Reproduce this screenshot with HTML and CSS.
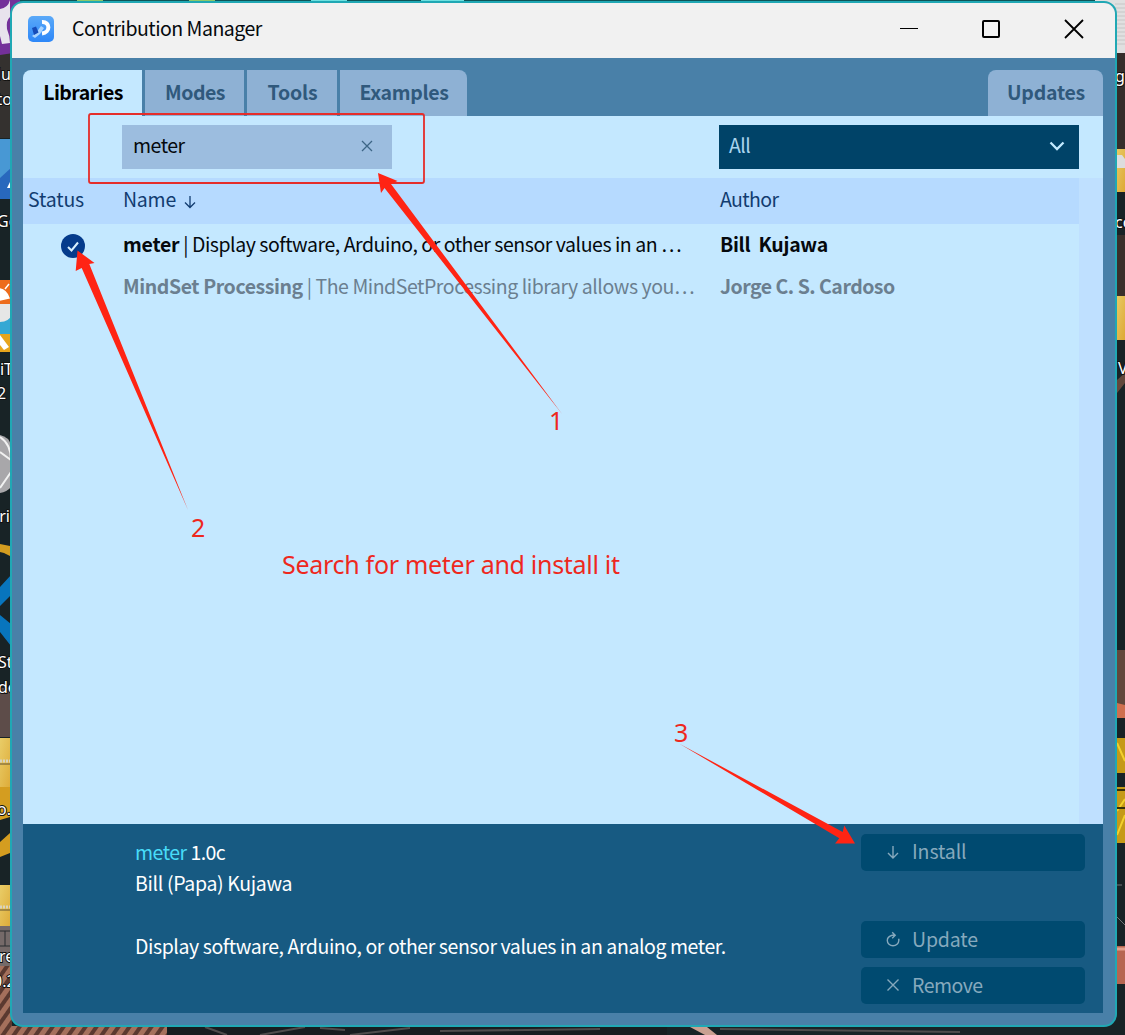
FILE: index.html
```html
<!DOCTYPE html>
<html lang="en">
<head>
<meta charset="utf-8">
<title>Contribution Manager</title>
<link rel="stylesheet" href="styles.css">
</head>
<body>
<div class="desktop">
  <svg class="wallpaper" width="1125" height="1035" viewBox="0 0 1125 1035" aria-hidden="true">
    <defs>
      <linearGradient id="folder" x1="0" y1="0" x2="1" y2="1"><stop offset="0" stop-color="#e9cd68"/><stop offset="1" stop-color="#dda936"/></linearGradient>
      <pattern id="roof" width="9" height="9" patternUnits="userSpaceOnUse" patternTransform="rotate(35)"><rect width="9" height="9" fill="#a5705c"/><rect width="4" height="9" fill="#5b3930"/></pattern>
    </defs>
    <rect width="1125" height="1035" fill="#182326"/>
    <rect width="1125" height="3" fill="#0d5457"/>
    <path d="M77 0h26v1H77zM189 0h26v1h-26z" fill="#8cc86a"/>
    <path d="M311 0h36v2h-36zM421 0h43v2h-43z" fill="#6ee0e0"/>
    <rect y="50" width="12" height="88" fill="#34312f"/>
    <path d="M0 0h20v52L0 55z" fill="#74309a"/>
    <path d="M0 9q8-1 10-9v17q-4 3-3 12 3 7 3 14l-8 1-2-8z" fill="#e8e3ed"/>
    <rect y="139" width="12" height="60" fill="#4898d4"/><path d="M12 167L0 178v21h12z" fill="#2868bd"/><path d="M7 188l3-6v6z" fill="#fff"/>
    <rect y="280" width="12" height="24" fill="#ed6c1c"/><path d="M0 289q6 1 9 9l-9 2zM5 289l4-5" stroke="#fff" stroke-width="1.500" fill="#fff"/><rect y="304" width="12" height="48" fill="#e6e6e6"/><path d="M0 322q9 0 12-8v22H0z" fill="#35a8d4"/><rect y="334" width="12" height="18" fill="#e7a51c"/><path d="M0 335l9 12-5 3-4-5z" fill="#fff"/>
    <path d="M0 435q9 2 11 10v42q-4 5-11 6z" fill="#a8a7aa"/><path d="M0 437q11 7 11 23L0 452m11 20L0 488" stroke="#f1f1f1" stroke-width="2" fill="none"/>
    <path d="M0 544l10 2v10l-6-3-4-1zM0 786l10-4v35l-10 3zM0 842l10-9v20l-10 4z" fill="#d49d20"/>
    <path d="M0 587l11-12v20L0 606zM0 615l11 9v22L0 632z" fill="#0875bd"/>
    <rect y="688" width="12" height="49" fill="#5d4c49"/>
    <rect y="738" width="12" height="49" fill="url(#folder)"/><rect y="885" width="12" height="41" fill="url(#folder)"/>
    <path d="M0 761h10M0 907h10" stroke="#d8d3c0" stroke-width="3" stroke-dasharray="2 1"/><path d="M0 764h10M0 910h10" stroke="#655535"/>
    <rect y="926" width="12" height="40" fill="#756a69"/><path d="M0 931h10M0 946h10M5 931v15" stroke="#292d30"/>
    <path d="M0 966h12v60h155v9H0z" fill="url(#roof)"/>
    <path d="M167 1026h500v9H167z" fill="#171d20"/><path d="M205 1027l22 8M260 1035l45-8M320 1028l25 2M350 1035l60-7M720 1029l240 3M440 1031l160-2" stroke="#4e4c4c" stroke-width="2"/><path d="M690 1027h17l10 8h-12z" fill="#c9a091"/>
    <path d="M1095 0h30v53h-30z" fill="#e0e0e0"/><path d="M1115 4h10m-10 4h10m-10 4h10m-10 4h10m-10 4h10m-10 4h10m-10 4h10m-10 4h10m-10 4h10m-10 4h10m-10 4h10" stroke="#c6c6c6"/>
    <rect x="1115" y="53" width="10" height="96" fill="#352e2b"/>
    <rect x="1115" y="149" width="10" height="43" fill="url(#folder)"/><path d="M1117 155h5l3 4v9h-8z" fill="#ddd"/>
    <rect x="1115" y="235" width="10" height="61" fill="#3a302b"/><rect x="1115" y="296" width="10" height="44" fill="url(#folder)"/>
    <path d="M1117 380l8-7v10l-8 10zM1117 650h8v60h-8z" fill="#62483c"/><path d="M1117 703l8 2v13h-8z" fill="#cf704f"/>
    <path d="M1117 738h8v35h-8zM1117 787h8v56h-8z" fill="#c59a17"/><path d="M1117 743l8 18M1117 811l8-12M1117 835l8-20" stroke="#f2d02c" stroke-width="2"/>
    <path d="M1117 790h8M1117 808h8" stroke="#35300c" stroke-width="2"/>
    <path d="M1117 917l8 8M1117 885h5" stroke="#707477"/><rect x="1117" y="946" width="8" height="38" fill="#b66651"/><path d="M1117 949h8" stroke="#e3a08c" stroke-width="3"/>
    <g class="desktop-label">
      <text x="11" y="80" text-anchor="end">Hu</text><text x="12" y="105" text-anchor="end">tto</text><text x="-3" y="227">Go</text><text x="13" y="375" text-anchor="end">liT</text><text x="-3" y="399">2</text><text x="10" y="522" text-anchor="end">ri</text><text x="-2" y="668">St</text><text x="-2" y="693">de</text><text x="-3" y="815">o.</text><text x="-1" y="962">re</text><text x="-7" y="987">0.2</text><text x="1115" y="82">g</text><text x="1115" y="228">co</text><text x="1118" y="374">V</text>
    </g>
  </svg>

  <main class="window">
    <header class="titlebar">
      <svg class="app-icon" width="26" height="26" viewBox="0 0 26 26">
        <defs><linearGradient id="app" x2="0" y2="1"><stop stop-color="#5aa9f8"/><stop offset="1" stop-color="#2d87f8"/></linearGradient></defs>
        <rect width="26" height="26" rx="5" fill="url(#app)"/>
        <path d="M8 17l5-7 3 2-4 6-5 4-3-2z" fill="#a9d4ff"/><path d="M4 12l4-1.500 2.500 6L6 19z" fill="#164cb8"/>
        <path d="M14 6c8.500-.5 8.500 10.500 0 11.500" fill="none" stroke="#fff" stroke-width="4"/>
      </svg>
      <h1 class="window-title"><span class="t-title">Contribution Manager</span></h1>
      <div class="window-controls">
        <svg width="20" height="22" viewBox="0 0 20 22"><path d="M1 10.500h18" stroke="#000" fill="none"/></svg>
        <svg width="20" height="22" viewBox="0 0 20 22"><rect x="2" y="3" width="16" height="16" rx="1" stroke="#000" stroke-width="2" fill="none"/></svg>
        <svg width="22" height="22" viewBox="0 0 22 22"><path d="M2 2l18 18M20 2L2 20" stroke="#000" stroke-width="1.800" fill="none"/></svg>
      </div>
    </header>
    <div class="window-body">
      <nav class="tabs">
        <a class="tab tab-libraries active"><span class="t-libraries">Libraries</span></a>
        <a class="tab tab-modes"><span class="t-modes">Modes</span></a>
        <a class="tab tab-tools"><span class="t-tools">Tools</span></a>
        <a class="tab tab-examples"><span class="t-examples">Examples</span></a>
        <a class="tab tab-updates"><span class="t-updates">Updates</span></a>
      </nav>
      <section class="filters">
        <div class="search"><span class="t-search">meter</span><svg width="12" height="12" viewBox="0 0 12 12"><path d="M1 1l10 10M11 1L1 11" stroke="#3d6586" stroke-width="1.300"/></svg></div>
        <div class="category"><span class="t-all">All</span><svg width="16" height="10" viewBox="0 0 16 10"><path d="M1.500 1.500L8 8l6.500-6.500" fill="none" stroke="#c2eaff" stroke-width="2.300"/></svg></div>
      </section>
      <section class="list">
        <div class="rows">
          <div class="row head">
            <span class="status-head"><span class="t-status">Status</span></span>
            <span class="name"><span class="t-name">Name</span><svg class="sort" width="12" height="14" viewBox="0 0 12 14"><path d="M6 1v11M1 7.500L6 12.500l5-5" fill="none" stroke="#123c70" stroke-width="1.300"/></svg></span>
            <span class="author"><span class="t-author">Author</span></span>
          </div>
          <div class="row">
            <span class="status"><svg width="24" height="24" viewBox="0 0 24 24"><circle cx="12" cy="12" r="12" fill="#053b8c"/><path d="M7 13l3.500 3.500L17 8.500" fill="none" stroke="#d8f0ff" stroke-width="2"/></svg></span>
            <span class="name"><b class="t-row1b">meter</b><span class="t-row1"> | Display software, Arduino, or other sensor values in an …</span></span>
            <span class="author"><b class="t-bill">Bill&nbsp; Kujawa</b></span>
          </div>
          <div class="row muted">
            <span class="status"></span>
            <span class="name"><b class="t-row2b">MindSet Processing</b><span class="t-row2"> | The MindSetProcessing library allows you…</span></span>
            <span class="author"><b class="t-jorge">Jorge C. S. Cardoso</b></span>
          </div>
        </div>
        <div class="gutter"></div>
      </section>
      <footer class="details">
        <div class="description">
          <p><span class="t-dmeter">meter</span><span class="t-version"> 1.0c</span></p>
          <p><span class="t-papa">Bill (Papa) Kujawa</span></p>
          <p class="summary"><span class="t-summary">Display software, Arduino, or other sensor values in an analog meter.</span></p>
        </div>
        <div class="actions">
          <div class="button install"><svg width="14" height="16" viewBox="0 0 14 16"><path d="M7 2v12M2 9l5 5 5-5" fill="none" stroke="currentColor" stroke-width="1.400"/></svg><span class="t-install">Install</span></div>
          <div class="button"><svg width="14" height="16" viewBox="0 0 14 16"><path d="M9 4.200H6.200C3 5 1.300 7 1.300 9.500c0 3 2.600 5.200 5.700 5.200s5.800-2.300 5.800-5.200v-1.800M6.200 1.200l3 3-3 3" fill="none" stroke="currentColor" stroke-width="1.400"/></svg><span class="t-update">Update</span></div>
          <div class="button"><svg width="14" height="16" viewBox="0 0 14 16"><path d="M1.500 2.500l11 11M12.500 2.500l-11 11" fill="none" stroke="currentColor" stroke-width="1.400"/></svg><span class="t-remove">Remove</span></div>
        </div>
      </footer>
    </div>
  </main>

  <svg class="annotations" width="1125" height="1035" viewBox="0 0 1125 1035">
    <rect x="89" y="114" width="335" height="69" rx="2" fill="none" stroke="#e52d2a" stroke-width="1.800"/>
    <g fill="#ff2414">
      <path d="M378 173l19.500 8-6.500 3L562 414 384.500 188l-3.500 5z"/>
      <path d="M77.500 250.500l17 12.500-5.200 1L188 510 81.700 268l-6 3z"/>
      <path d="M855 843.500l-10.700-18-1.600 6.500L679 743.500l160.300 94.800-4.300 5.200z"/>
    </g>
    <g class="note">
      <text x="549" y="430">1</text><text x="191" y="537">2</text><text x="674" y="742">3</text>
      <text x="282" y="574" textLength="338">Search for meter and install it</text>
    </g>
  </svg>
</div>
</body>
</html>
```
FILE: styles.css
```css
* { box-sizing: border-box; }
body { margin: 0; overflow: hidden; font-family: "Noto Sans CJK SC", "Noto Sans", sans-serif; font-size: 19.5px; line-height: 30px; color: #05090d; }
h1, p { margin: 0; font-size: inherit; font-weight: 400; }
svg { flex: none; display: block; }
.desktop { position: relative; width: 1125px; height: 1035px; overflow: hidden; padding: 1px 8px 8px 10px; }
.wallpaper, .annotations { position: absolute; top: 0; left: 0; }
.annotations { pointer-events: none; z-index: 2; }
.desktop-label { font: 16px "Noto Sans", sans-serif; fill: #fff; stroke: #111; stroke-width: 2px; paint-order: stroke; }
.note { font: 25px "Noto Sans", sans-serif; fill: #ee281e; }

.window { position: relative; display: flex; flex-direction: column; width: 1107px; height: 1026px; border: 2px solid #20a8b4; border-radius: 13px; overflow: hidden; background: #4980a8; white-space: nowrap; }
.titlebar { display: flex; align-items: center; height: 55px; flex: none; padding: 0 30px 3px 16px; background: #f1f1f1; }
.window-title { flex: 1; margin-left: 18px; padding-bottom: 2px; }
.window-controls { display: flex; gap: 62px; align-items: center; }
.window-body { flex: 1; display: flex; flex-direction: column; padding: 12px 12px 12px 11px; }
.tabs { display: flex; gap: 3px; height: 46px; font-weight: 700; }
.tab { display: flex; align-items: center; justify-content: center; padding: 0 0 2px 1px; background: #8eb1d4; color: #30597c; }
.tab.active { background: #c4e8ff; color: #000; border-top-left-radius: 8px; }
.tab-libraries { width: 119px; }
.tab-modes { width: 99px; }
.tab-tools { width: 90px; }
.tab-examples { width: 127px; border-top-right-radius: 8px; }
.tab-updates { width: 115px; margin-left: auto; border-radius: 8px 8px 0 0; }
.filters { display: flex; justify-content: space-between; align-items: center; height: 62px; flex: none; padding: 0 24px 0 99px; background: #c4e8ff; }
.search { display: flex; align-items: center; justify-content: space-between; width: 270px; height: 44px; padding: 0 19px 2px 11px; background: #9cbddf; }
.category { display: flex; align-items: center; justify-content: space-between; width: 360px; height: 44px; padding: 0 14px 2px 10px; background: #004368; color: #a9d4ee; }
.search span, .category span { padding-bottom: 2px; }
.list { display: flex; flex: 1; background: #c4e8ff; }
.rows { flex: 1; }
.gutter { width: 24px; background: #bfe0ff; }
.row { display: grid; grid-template-columns: 100px 597px 1fr; align-items: center; height: 42px; }
.row.head { height: 46px; background: #b6daff; color: #123c70; padding-bottom: 2px; }
.row.muted { color: #6b7f90; }
.status-head { padding: 0 0 2px 5px; }
.status { padding: 1px 0 0 38px; }
.name { display: flex; align-items: center; white-space: pre; padding-bottom: 2px; }
.author { padding-bottom: 2px; }
.sort { margin: 6px 0 0 8px; }
.details { display: flex; justify-content: space-between; height: 189px; flex: none; padding: 10px 18px 9px 112px; background: #175a82; color: #fff; }
.description { padding-top: 2px; line-height: 31px; }
.description p { white-space: pre; }
.summary { margin-top: 32px; }
.actions { display: flex; flex-direction: column; gap: 9px; width: 224px; color: #86a9bd; }
.button { display: flex; align-items: center; gap: 12px; height: 37px; padding: 0 0 2px 25px; border-radius: 5px; background: #004a70; }
.install { margin-bottom: 41px; }
.install span { padding-bottom: 1px; }

/* Tracking for the individual labels */
.t-title { letter-spacing: -0.5px; }
.t-libraries { letter-spacing: -0.55px; }
.t-modes { letter-spacing: -0.5px; }
.t-tools { letter-spacing: -0.2px; }
.t-examples { letter-spacing: -0.35px; }
.t-updates { letter-spacing: -0.25px; }
.t-search { letter-spacing: -0.5px; }
.t-all { letter-spacing: -0.6px; }
.t-status { letter-spacing: -0.15px; }
.t-name { letter-spacing: -0.25px; }
.t-author { letter-spacing: -0.6px; }
.t-row1b { letter-spacing: -0.25px; }
.t-row1 { letter-spacing: -0.46px; }
.t-row2b { letter-spacing: -0.42px; }
.t-row2 { letter-spacing: -0.45px; }
.t-bill { letter-spacing: -0.3px; }
.t-jorge { letter-spacing: -0.5px; }
.t-dmeter { letter-spacing: -0.5px; color: #48dcf8; }
.t-version { letter-spacing: -0.55px; }
.t-papa { letter-spacing: -0.33px; }
.t-summary { letter-spacing: -0.42px; }
.t-install { letter-spacing: -0.1px; }
.t-update { letter-spacing: -0.15px; }
.t-remove { letter-spacing: -0.5px; }
```
